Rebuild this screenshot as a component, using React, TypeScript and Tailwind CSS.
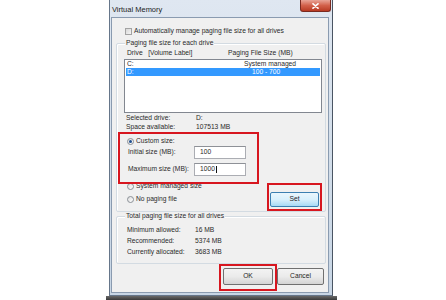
import React from "react";

function Radio({ checked = false }: { checked?: boolean }) {
  return (
    <span className="w-[7px] h-[7px] rounded-full border border-[#8a8f96] bg-gradient-to-br from-[#dcdcdc] to-[#ffffff] flex items-center justify-center shrink-0">
      {checked && <span className="w-[3px] h-[3px] rounded-full bg-[#1f4f8f]" />}
    </span>
  );
}

function Btn({ label, w, blue = false }: { label: string; w: string; blue?: boolean }) {
  return (
    <div
      className={
        blue
          ? `${w} h-[15px] border border-[#3c7fb1] rounded-[2px] bg-gradient-to-b from-[#eaf6fd] via-[#d9f0fc] to-[#a7d9f5] flex items-center justify-center text-[#1e1e1e]`
          : `${w} h-[17px] border border-[#707070] rounded-[2px] bg-gradient-to-b from-[#f3f3f3] via-[#ebebeb] to-[#d4d4d4] flex items-center justify-center text-[#1e1e1e]`
      }
    >
      {label}
    </div>
  );
}

export default function App() {
  return (
    <div className="relative w-[446px] h-[300px] overflow-hidden bg-white font-['Liberation_Sans',Arial,sans-serif] text-[6.7px] leading-none text-[#2a2a2a]">
      {/* window */}
      <div className="ml-[109px] w-[224px] h-[296px] flex flex-col border border-t-0 border-[#66768a] border-r-[#4a5563] bg-gradient-to-b from-[#dfe7f1] via-[#d3deea] to-[#c8d6e5]">
        {/* title bar */}
        <div className="h-[17px] flex justify-between items-start">
          <div className="pl-[2px] pt-[6px] text-[7.5px] text-[#1c1c1c]">Virtual Memory</div>
          <div className="mr-[1px] w-[31px] h-[12px] rounded-b-[3px] border border-t-0 border-[#7a2a20] bg-gradient-to-b from-[#e8a497] via-[#d2604a] to-[#b83a22] flex items-center justify-center">
            <svg width="7" height="6" viewBox="0 0 7 6">
              <path d="M1 0.8 L6 5.2 M6 0.8 L1 5.2" stroke="#ffffff" strokeWidth="1.6" strokeLinecap="round" />
            </svg>
          </div>
        </div>

        {/* content */}
        <div className="ml-[1px] mr-[3px] h-[276px] border border-[#8a9bb0] bg-[#f0f0f0] flex flex-col">
          {/* auto manage checkbox */}
          <div className="mt-[10px] ml-[13px] h-[7px] flex items-center gap-[2px] whitespace-nowrap">
            <span className="w-[7px] h-[7px] border border-[#a3a3a3] bg-gradient-to-br from-[#d8d8d8] to-[#f4f4f4] shrink-0" />
            <span>Automatically manage paging file size for all drives</span>
          </div>

          {/* group 1 */}
          <div className="relative mt-[8px] ml-[4px] w-[210px] h-[169px] border border-[#d3dbe2] rounded-[2px] shadow-[inset_1px_1px_0_#ffffff] flex flex-col pl-[7px]">
            <div className="absolute -top-[4px] left-[8px] px-[1px] h-[7px] bg-[#f0f0f0] flex items-center whitespace-nowrap">
              Paging file size for each drive
            </div>

            <div className="mt-[6px] pl-[3px] h-[7px] flex items-center whitespace-pre">
              <span className="w-[101px]">Drive   [Volume Label]</span>
              <span>Paging File Size (MB)</span>
            </div>

            <div className="mt-[2px] w-[198px] h-[54px] border border-[#828790] bg-white flex flex-col">
              <div className="h-[8px] pl-[2px] flex items-center whitespace-nowrap">
                <span className="w-[117px]">C:</span>
                <span>System managed</span>
              </div>
              <div className="h-[8px] mx-[1px] pl-[1px] bg-[#3399ff] text-white flex items-center whitespace-nowrap">
                <span className="w-[125px]">D:</span>
                <span>100 - 700</span>
              </div>
            </div>

            <div className="mt-[2px] pl-[2px] h-[7px] flex items-center whitespace-nowrap">
              <span className="w-[70px]">Selected drive:</span>
              <span>D:</span>
            </div>
            <div className="mt-[2px] pl-[2px] h-[7px] flex items-center whitespace-nowrap">
              <span className="w-[70px]">Space available:</span>
              <span>107513 MB</span>
            </div>

            <div className="mt-[7px] pl-[3px] h-[7px] flex items-center gap-[2px] whitespace-nowrap">
              <Radio checked />
              <span>Custom size:</span>
            </div>
            <div className="mt-[1px] pl-[4px] h-[13px] flex items-center whitespace-nowrap">
              <span className="w-[66px]">Initial size (MB):</span>
              <div className="w-[52px] h-[13px] border border-[#abadb3] border-t-[#8e9197] bg-white pl-[5px] flex items-center">100</div>
            </div>
            <div className="mt-[4px] pl-[4px] h-[13px] flex items-center whitespace-nowrap">
              <span className="w-[66px]">Maximum size (MB):</span>
              <div className="w-[52px] h-[13px] border border-[#abadb3] border-t-[#8e9197] bg-white pl-[5px] flex items-center">
                1000<span className="ml-[1px] w-[1px] h-[7px] bg-[#111]" />
              </div>
            </div>

            <div className="mt-[7px] flex items-start">
              <div className="pl-[3px] flex flex-col">
                <div className="h-[7px] flex items-center gap-[2px] whitespace-nowrap">
                  <Radio />
                  <span>System managed size</span>
                </div>
                <div className="mt-[6px] h-[7px] flex items-center gap-[2px] whitespace-nowrap">
                  <Radio />
                  <span>No paging file</span>
                </div>
              </div>
              <div className="ml-auto mr-[6px] mt-[9px]">
                <Btn label="Set" w="w-[49px]" blue />
              </div>
            </div>
          </div>

          {/* group 2 */}
          <div className="relative mt-[4px] ml-[4px] w-[210px] h-[48px] border border-[#d3dbe2] rounded-[2px] shadow-[inset_1px_1px_0_#ffffff] flex flex-col pl-[10px]">
            <div className="absolute -top-[4px] left-[8px] px-[1px] h-[7px] bg-[#f0f0f0] flex items-center whitespace-nowrap">
              Total paging file size for all drives
            </div>
            <div className="mt-[10px] h-[7px] flex items-center whitespace-nowrap">
              <span className="w-[68px]">Minimum allowed:</span>
              <span>16 MB</span>
            </div>
            <div className="mt-[4px] h-[7px] flex items-center whitespace-nowrap">
              <span className="w-[68px]">Recommended:</span>
              <span>5374 MB</span>
            </div>
            <div className="mt-[4px] h-[7px] flex items-center whitespace-nowrap">
              <span className="w-[68px]">Currently allocated:</span>
              <span>3683 MB</span>
            </div>
          </div>

          {/* buttons */}
          <div className="mt-[4px] pr-[4px] flex justify-end gap-[4px]">
            <Btn label="OK" w="w-[50px]" />
            <Btn label="Cancel" w="w-[47px]" />
          </div>
        </div>
      </div>
      {/* window behind */}
      <div className="ml-[106px] w-[231px] h-[4px] bg-gradient-to-b from-[#6a6a6a] to-[#3a3a3a]" />

      {/* red annotation boxes */}
      <div className="absolute left-[118px] top-[132px] w-[141px] h-[52px] border-2 border-[#d7161f]" />
      <div className="absolute left-[267px] top-[183px] w-[55px] h-[28px] border-2 border-[#d7161f]" />
      <div className="absolute left-[219px] top-[264px] w-[58px] h-[27px] border-2 border-[#d7161f]" />
    </div>
  );
}
